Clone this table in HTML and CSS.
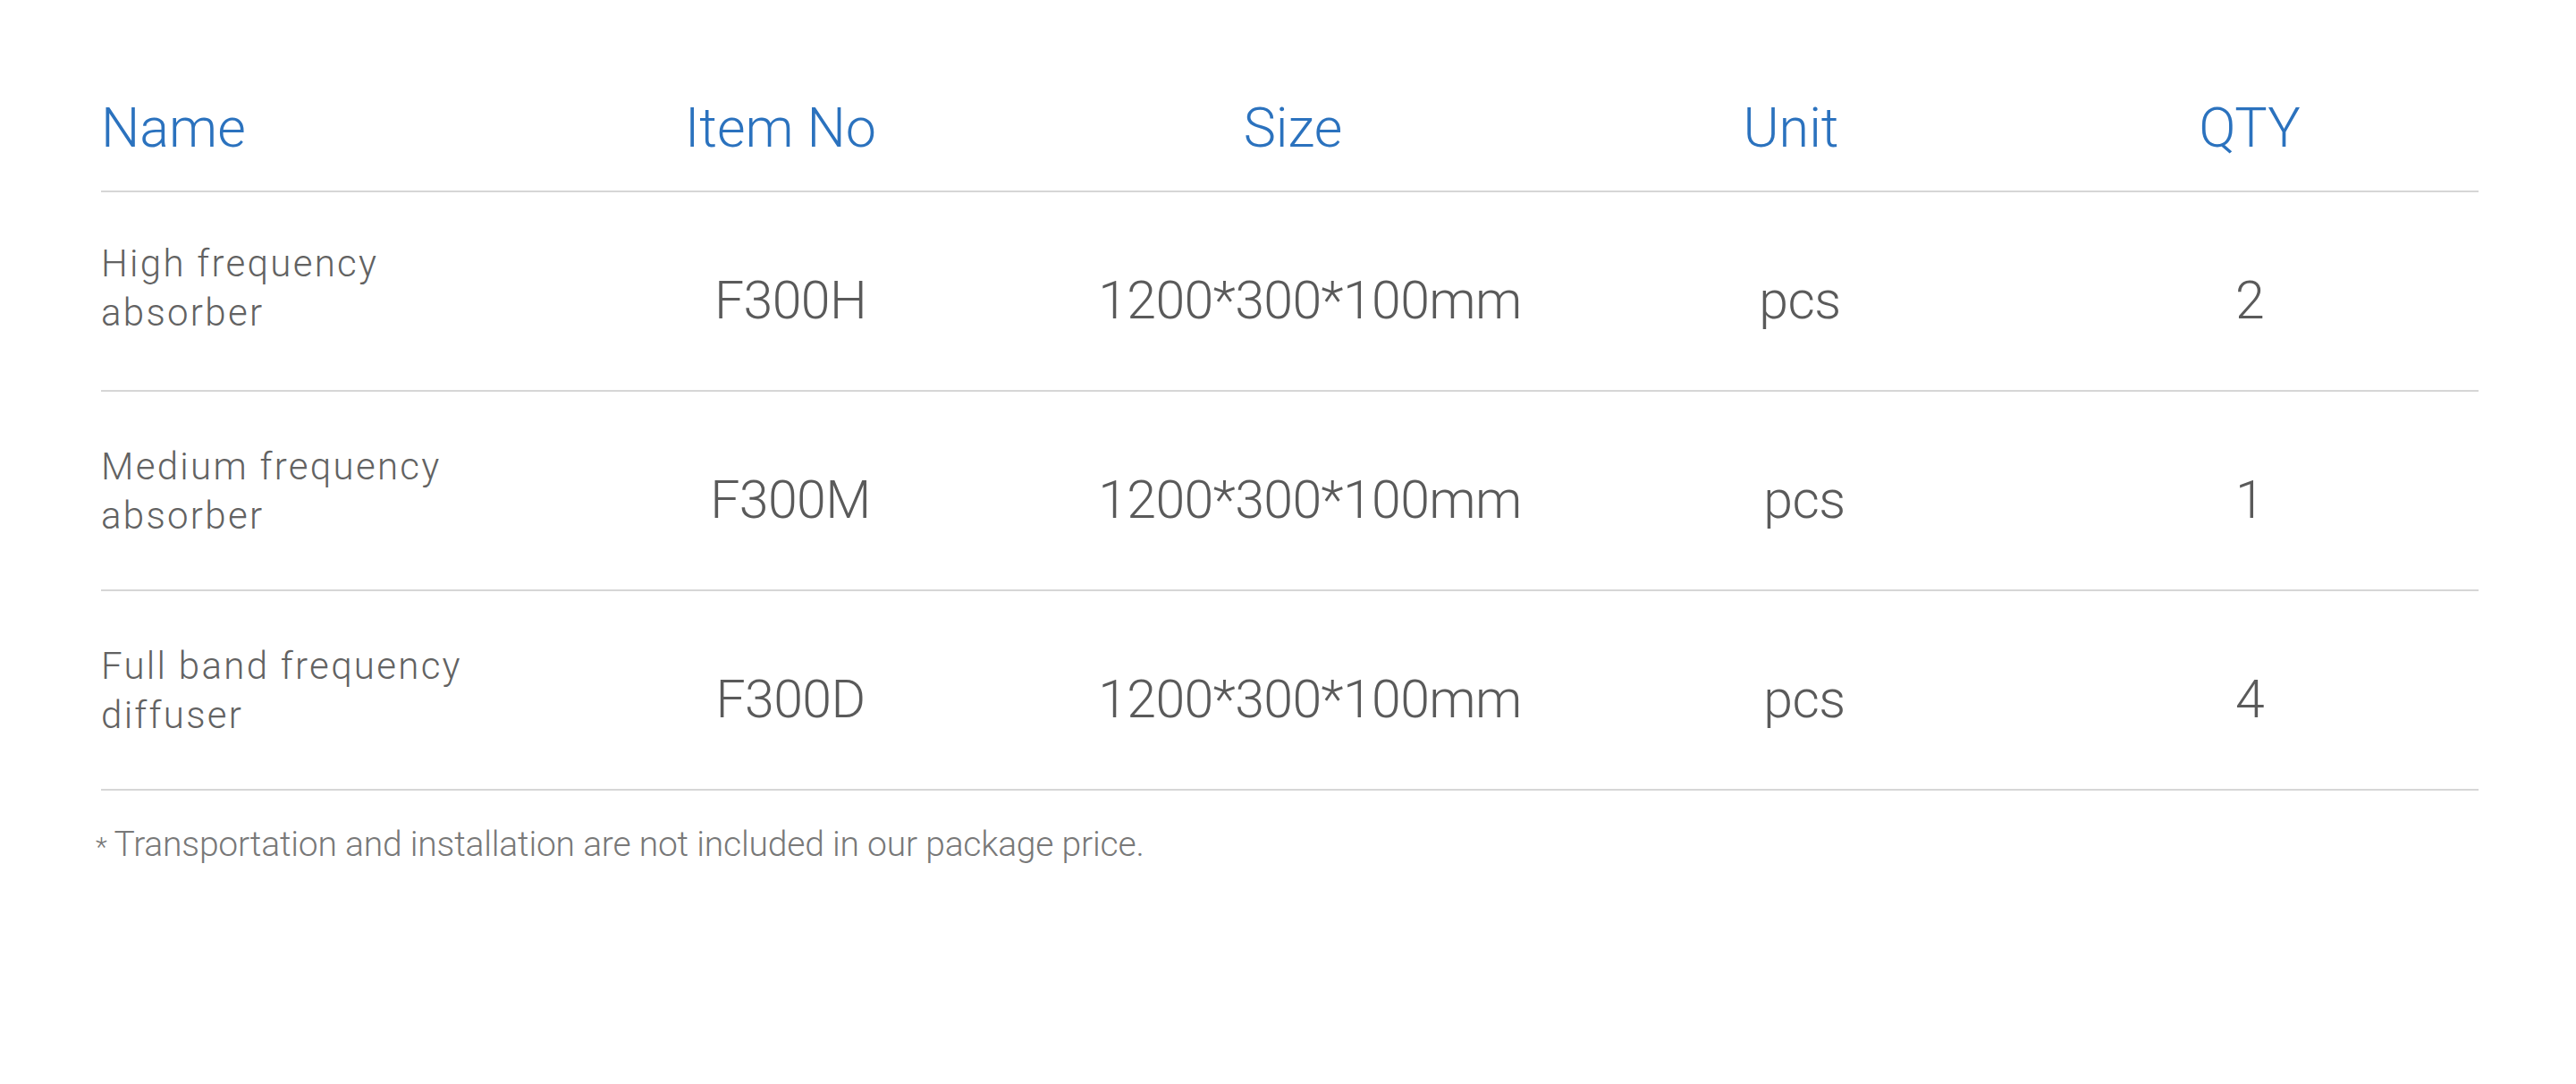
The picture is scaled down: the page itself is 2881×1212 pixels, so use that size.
FILE: index.html
```html
<!DOCTYPE html>
<html lang="en">
<head>
<meta charset="utf-8">
<title>Package list</title>
<link rel="stylesheet" href="styles.css">
</head>
<body>
<main class="page">
  <div class="table">
    <div class="row head">
      <div class="cell name">Name</div>
      <div class="cell c2">Item No</div>
      <div class="cell c3">Size</div>
      <div class="cell c4">Unit</div>
      <div class="cell c5">QTY</div>
    </div>
    <div class="row item">
      <div class="cell name">High frequency<br>absorber</div>
      <div class="cell">F300H</div>
      <div class="cell">1200*300*100mm</div>
      <div class="cell unit1">pcs</div>
      <div class="cell">2</div>
    </div>
    <div class="row item">
      <div class="cell name">Medium frequency<br>absorber</div>
      <div class="cell">F300M</div>
      <div class="cell">1200*300*100mm</div>
      <div class="cell">pcs</div>
      <div class="cell">1</div>
    </div>
    <div class="row item">
      <div class="cell name">Full band frequency<br>diffuser</div>
      <div class="cell">F300D</div>
      <div class="cell">1200*300*100mm</div>
      <div class="cell">pcs</div>
      <div class="cell">4</div>
    </div>
  </div>
  <p class="note"><span class="star">*</span>Transportation and installation are not included in our package price.</p>
</main>
</body>
</html>
```
FILE: styles.css
```css
html, body {
  margin: 0;
  padding: 0;
  background: #ffffff;
}

.page {
  padding: 110px 109px 0 113px;
  font-family: Roboto, "Noto Sans", sans-serif;
  font-weight: 300;
}

.table {
  display: flex;
  flex-direction: column;
}

.row {
  display: grid;
  grid-template-columns: 501px 540px 622px 484px 1fr;
  align-items: center;
  border-bottom: 2px solid #d6d6d6;
}

.cell {
  text-align: center;
  white-space: nowrap;
}

.cell.name {
  text-align: left;
}

/* header */
.head {
  padding-bottom: 37px;
  font-size: 61px;
  line-height: 66px;
  color: #2b72be;
}

.head .c2 { padding-right: 22px; }
.head .c3 { padding-right: 38px; }
.head .c4 { padding-right: 30px; }

/* body rows */
.item {
  height: 221px;
  font-size: 59px;
  line-height: 66px;
  color: #5a5a5a;
}

.item .cell {
  padding-top: 21px;
  letter-spacing: -0.6px;
}

.item .cell.name {
  padding-top: 0;
  font-size: 42px;
  line-height: 55px;
  letter-spacing: 2.3px;
  color: #626262;
}

.item:first-of-type .cell.name,
.head + .item .cell.name {
  padding-bottom: 8px;
}

.item .unit1 {
  padding-right: 10px;
}

/* footnote */
.note {
  margin: 40px 0 0 -6px;
  font-size: 39px;
  line-height: 41px;
  letter-spacing: -0.2px;
  color: #787878;
}

.star {
  font-size: 30px;
  margin-right: 8px;
}
```
